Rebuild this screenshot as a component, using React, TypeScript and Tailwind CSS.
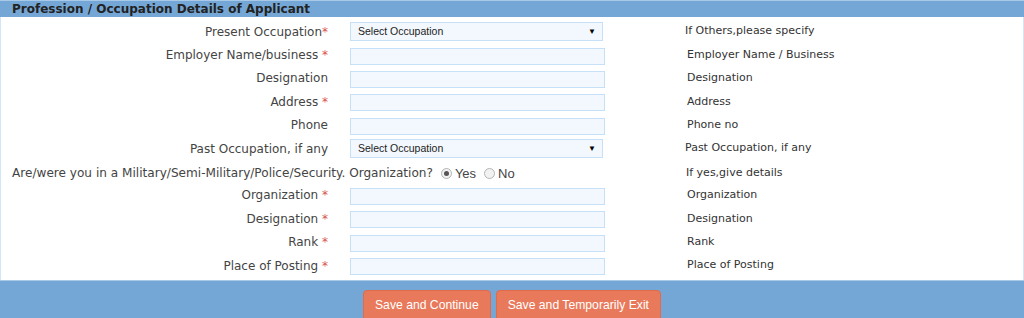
const labelFont = { fontFamily: '"DejaVu Sans", Verdana, sans-serif' };

type Row = {
  label: string;
  required?: boolean;
  tight?: boolean;
  kind: "select" | "input";
  hint: string;
};

const rowsTop: Row[] = [
  { label: "Present Occupation", required: true, tight: true, kind: "select", hint: "If Others,please specify" },
  { label: "Employer Name/business", required: true, kind: "input", hint: "Employer Name / Business" },
  { label: "Designation", kind: "input", hint: "Designation" },
  { label: "Address", required: true, kind: "input", hint: "Address" },
  { label: "Phone", kind: "input", hint: "Phone no" },
  { label: "Past Occupation, if any", kind: "select", hint: "Past Occupation, if any" },
];

const rowsBottom: Row[] = [
  { label: "Organization", required: true, kind: "input", hint: "Organization" },
  { label: "Designation", required: true, kind: "input", hint: "Designation" },
  { label: "Rank", required: true, kind: "input", hint: "Rank" },
  { label: "Place of Posting", required: true, kind: "input", hint: "Place of Posting" },
];

function Field({ kind }: { kind: Row["kind"] }) {
  if (kind === "select") {
    return (
      <div className="ml-[22px] flex h-[19px] w-[253px] items-center justify-between border border-[#c6e0f8] bg-[#f3f8fe] pl-[7px] pr-[6px] font-['Liberation_Sans',Arial,sans-serif] text-[10.5px] text-[#222]">
        <span>Select Occupation</span>
        <span className="text-[8px] text-black">▼</span>
      </div>
    );
  }
  return <div className="ml-[22px] mt-[2px] h-[17px] w-[255px] border border-[#c6e0f8] bg-[#f3f8fe]" />;
}

function FormRow({ row }: { row: Row }) {
  return (
    <div className="flex h-[23.4px] items-center">
      <div className="w-[327px] text-right text-[12px] text-[#444]" style={labelFont}>
        {row.label}
        {row.required && <span className="text-[#d9534f]">{row.tight ? "*" : " *"}</span>}
      </div>
      <Field kind={row.kind} />
      <div className="ml-[82px] text-[11px] text-[#333]" style={labelFont}>
        {row.hint}
      </div>
    </div>
  );
}

function Radio({ checked }: { checked?: boolean }) {
  return (
    <span className="inline-flex h-[11px] w-[11px] items-center justify-center rounded-full border border-[#b5b5b5] bg-[#f2f2f2]">
      {checked && <span className="h-[5px] w-[5px] rounded-full bg-[#555]" />}
    </span>
  );
}

export default function App() {
  return (
    <div className="h-[318px] w-[1024px] overflow-hidden bg-white">
      <div
        className="h-[17px] border-t border-[#a9c9e9] bg-[#74a7d6] pl-[12px] text-[12px] font-bold leading-[16px] text-[#222]"
        style={labelFont}
      >
        Profession / Occupation Details of Applicant
      </div>

      <div className="border-x border-[#d3e6f7] pb-[3px] pt-[3px]">
        {rowsTop.map((r, i) => (
          <FormRow key={i} row={r} />
        ))}

        <div className="flex h-[23.4px] items-center pt-[3px]">
          <div className="flex w-[685px] items-center pl-[11px] text-[12.1px] text-[#444]" style={labelFont}>
            <span>Are/were you in a Military/Semi-Military/Police/Security. Organization?</span>
            <span className="ml-[8px] flex items-center gap-[3px] font-['Liberation_Sans',Arial,sans-serif] text-[13px]">
              <Radio checked />
              Yes
            </span>
            <span className="ml-[8px] flex items-center gap-[3px] font-['Liberation_Sans',Arial,sans-serif] text-[13px]">
              <Radio />
              No
            </span>
          </div>
          <div className="text-[11px] text-[#333]" style={labelFont}>
            If yes,give details
          </div>
        </div>

        {rowsBottom.map((r, i) => (
          <FormRow key={i} row={r} />
        ))}
      </div>

      <div className="flex h-[40px] justify-center gap-[5px] border-t border-[#a9c9e9] bg-[#74a7d6] pt-[9px]">
        <button className="h-[34px] rounded-[4px] border border-[#df6a4c] bg-[#e9795b] px-[11px] pb-[5px] font-['Liberation_Sans',Arial,sans-serif] text-[12.2px] text-white">
          Save and Continue
        </button>
        <button className="h-[34px] rounded-[4px] border border-[#df6a4c] bg-[#e9795b] px-[11px] pb-[5px] font-['Liberation_Sans',Arial,sans-serif] text-[12.2px] text-white">
          Save and Temporarily Exit
        </button>
      </div>
    </div>
  );
}
